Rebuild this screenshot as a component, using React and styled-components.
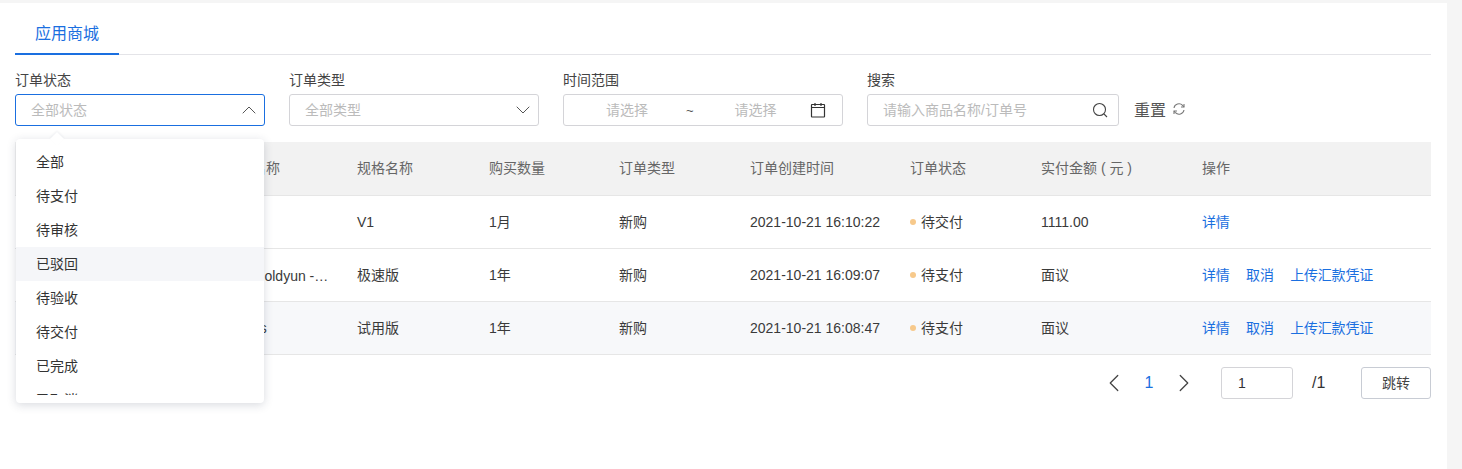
import React from 'react';
import styled, { createGlobalStyle } from 'styled-components';
import { ChevronUp, ChevronDown, ChevronLeft, ChevronRight } from 'lucide-react';

const orderStates = ['全部', '待支付', '待审核', '已驳回', '待验收', '待交付', '已完成', '已取消'];

const orders = [
  { id: '20211021161022', name: '测试', spec: 'V1', amount: '1月', type: '新购', time: '2021-10-21 16:10:22', state: '待交付', pay: '1111.00', actions: ['详情'] },
  { id: '20211021160907', name: 'Mini Goldyun - 云管理平台', spec: '极速版', amount: '1年', type: '新购', time: '2021-10-21 16:09:07', state: '待支付', pay: '面议', actions: ['详情', '取消', '上传汇款凭证'] },
  { id: '20211021160847', name: 'Nginxs', spec: '试用版', amount: '1年', type: '新购', time: '2021-10-21 16:08:47', state: '待支付', pay: '面议', actions: ['详情', '取消', '上传汇款凭证'] },
];

const columns = [
  { title: '订单编号', width: 193 },
  { title: '商品名称', width: 133 },
  { title: '规格名称', width: 132 },
  { title: '购买数量', width: 130 },
  { title: '订单类型', width: 131 },
  { title: '订单创建时间', width: 160 },
  { title: '订单状态', width: 131 },
  { title: '实付金额 ( 元 )', width: 161 },
  { title: '操作', width: 245 },
];

// Chinese glyphs sit a pixel low next to the latin ones
const hasCjk = (text) => /[^\x00-\x7f]/.test(text);

const App = () => {
  return (
    <Page>
      <GlobalStyle />
      <Panel>
        <Tabs>
          <Tab>应用商城</Tab>
        </Tabs>
        <Filters>
          <Field $width={250}>
            <Label>订单状态</Label>
            <SelectBox $focused>
              <Placeholder>全部状态</Placeholder>
              <ChevronUp size={24} strokeWidth={1} color="#555" />
            </SelectBox>
            <Dropdown>
              <DropdownList>
                {orderStates.map((state) => (
                  <DropdownItem key={state} $active={state === '已驳回'}>
                    {state}
                  </DropdownItem>
                ))}
              </DropdownList>
            </Dropdown>
          </Field>
          <Field $width={250}>
            <Label>订单类型</Label>
            <SelectBox>
              <Placeholder>全部类型</Placeholder>
              <ChevronDown size={24} strokeWidth={1} color="#555" />
            </SelectBox>
          </Field>
          <Field $width={280}>
            <Label>时间范围</Label>
            <DateBox>
              <Placeholder>请选择</Placeholder>
              <Tilde>~</Tilde>
              <Placeholder>请选择</Placeholder>
              <CalendarIcon width="16" height="16" viewBox="0 0 16 16" fill="none" stroke="#333" strokeWidth="1.2">
                <rect x="1.5" y="2.5" width="13" height="12.5" rx="0.5" />
                <path d="M1.5 5.5h13M5 1v3M11 1v3" />
              </CalendarIcon>
            </DateBox>
          </Field>
          <Field $width={252}>
            <Label>搜索</Label>
            <SearchBox>
              <Placeholder>请输入商品名称/订单号</Placeholder>
              <svg width="16" height="16" viewBox="0 0 16 16" fill="none" stroke="#444" strokeWidth="1.1">
                <circle cx="7.5" cy="7.5" r="6" />
                <path d="M12 12l3 3" />
              </svg>
            </SearchBox>
          </Field>
          <ResetButton>
            重置
            <svg width="14" height="14" viewBox="0 0 14 14" fill="none" stroke="#777" strokeWidth="1.1">
              <path d="M2 6a5 5 0 0 1 8.6-2.6L12 5" />
              <path d="M12 2v3H9" />
              <path d="M12 8a5 5 0 0 1-8.6 2.6L2 9" />
              <path d="M2 12V9h3" />
            </svg>
          </ResetButton>
        </Filters>
        <Table>
          <colgroup>
            {columns.map((col) => (
              <col key={col.title} width={col.width} />
            ))}
          </colgroup>
          <thead>
            <tr>
              {columns.map((col) => (
                <HeadCell key={col.title}>{col.title}</HeadCell>
              ))}
            </tr>
          </thead>
          <tbody>
            {orders.map((order, index) => (
              <Row key={order.id} $striped={index === 2}>
                <Cell>{order.id}</Cell>
                <NameCell>{order.name}</NameCell>
                <Cell $cjk={hasCjk(order.spec)}>{order.spec}</Cell>
                <Cell $cjk>{order.amount}</Cell>
                <Cell $cjk>{order.type}</Cell>
                <Cell>{order.time}</Cell>
                <Cell $cjk>
                  <StateDot />
                  {order.state}
                </Cell>
                <Cell $cjk={hasCjk(order.pay)}>{order.pay}</Cell>
                <Cell $cjk>
                  <Actions>
                    {order.actions.map((action) => (
                      <ActionLink key={action}>{action}</ActionLink>
                    ))}
                  </Actions>
                </Cell>
              </Row>
            ))}
          </tbody>
        </Table>
        <Pagination>
          <PageArrow>
            <ChevronLeft size={30} strokeWidth={1} color="#444" />
          </PageArrow>
          <PageNumber>1</PageNumber>
          <PageArrow>
            <ChevronRight size={30} strokeWidth={1} color="#444" />
          </PageArrow>
          <PageInput>1</PageInput>
          <PageTotal>/1</PageTotal>
          <JumpButton>跳转</JumpButton>
        </Pagination>
      </Panel>
    </Page>
  );
};

export default App;

const GlobalStyle = createGlobalStyle`
  html, body {
    margin: 0;
    padding: 0;
    background: #f5f5f5;
  }

  body {
    font-family: "Liberation Sans", "Noto Sans CJK SC", sans-serif;
    font-size: 14px;
    color: #333;
    overflow: hidden;
  }
`;

const Page = styled.div`
  height: 469px;
  padding-top: 3px;
  box-sizing: border-box;
`;

const Panel = styled.div`
  width: 1447px;
  height: 466px;
  background: #fff;
  padding: 0 16px 0 15px;
  box-sizing: border-box;
`;

const Tabs = styled.div`
  display: flex;
  height: 52px;
  border-bottom: 1px solid #e4e4e8;
  box-sizing: border-box;
`;

const Tab = styled.div`
  width: 104px;
  height: 52px;
  padding-top: 21px;
  box-sizing: border-box;
  text-align: center;
  font-size: 16px;
  line-height: 20px;
  color: #1a6fe0;
  border-bottom: 2px solid #1a6fe0;
`;

const Filters = styled.div`
  display: flex;
  align-items: flex-end;
  gap: 24px;
  margin-top: 15px;
`;

const Field = styled.div`
  position: relative;
  width: ${(props) => props.$width}px;
`;

const Label = styled.div`
  height: 24px;
  line-height: 20px;
  color: #444;
`;

const InputBox = styled.div`
  height: 32px;
  display: flex;
  align-items: center;
  justify-content: space-between;
  box-sizing: border-box;
  border: 1px solid ${(props) => (props.$focused ? '#1a6fe0' : '#d4d4d8')};
  border-radius: 3px;
  background: #fff;
`;

const SelectBox = styled(InputBox)`
  padding: 0 3px 0 15px;
`;

const SearchBox = styled(InputBox)`
  padding: 0 10px 0 15px;
`;

const DateBox = styled(InputBox)`
  justify-content: flex-start;
  padding: 0 16px 0 42px;
`;

const CalendarIcon = styled.svg`
  margin-left: auto;
`;

const Placeholder = styled.span`
  margin-bottom: 2px;
  color: #bbb;
  white-space: nowrap;
`;

const Tilde = styled.span`
  margin: 0 41px 0 38px;
  color: #555;
  font-size: 13px;
`;

const Dropdown = styled.div`
  position: absolute;
  z-index: 5;
  top: 69px;
  left: 1px;
  width: 248px;
  height: 264px;
  background: #fff;
  border-radius: 4px;
  box-shadow: 0 2px 10px rgba(40, 50, 80, 0.18);

  &::before {
    content: '';
    position: absolute;
    top: -5px;
    left: 36px;
    width: 10px;
    height: 10px;
    background: #fff;
    transform: rotate(45deg);
    box-shadow: -1px -1px 2px rgba(40, 50, 80, 0.06);
  }
`;

const DropdownList = styled.ul`
  position: relative;
  list-style: none;
  margin: 0;
  padding: 6px 0 0;
  height: 256px;
  box-sizing: border-box;
  overflow: hidden;
`;

const DropdownItem = styled.li`
  height: 34px;
  line-height: 34px;
  padding-left: 20px;
  color: #333;
  background: ${(props) => (props.$active ? '#f5f6f9' : 'transparent')};
`;

const ResetButton = styled.div`
  display: flex;
  align-items: center;
  gap: 6px;
  height: 32px;
  padding-bottom: 3px;
  box-sizing: border-box;
  margin-left: -9px;
  font-size: 16px;
  color: #555;
`;

const Table = styled.table`
  width: 1416px;
  margin-top: 16px;
  table-layout: fixed;
  border-collapse: collapse;
`;

const HeadCell = styled.th`
  height: 53px;
  padding: 0 0 2px 16px;
  box-sizing: border-box;
  background: #f2f2f2;
  border-bottom: 1px solid #e6e6e6;
  font-weight: 400;
  text-align: left;
  color: #666;
  white-space: nowrap;
`;

const Row = styled.tr`
  background: ${(props) => (props.$striped ? '#f7f8fa' : '#fff')};
`;

const Cell = styled.td`
  height: 53px;
  padding: 0 0 ${(props) => (props.$cjk ? '2px' : '0')} 16px;
  box-sizing: border-box;
  border-bottom: 1px solid #e6e6e6;
  color: #3a3a3a;
  white-space: nowrap;
`;

const NameCell = styled(Cell)`
  padding-right: 10px;
  overflow: hidden;
  text-overflow: ellipsis;
`;

const StateDot = styled.span`
  display: inline-block;
  width: 6px;
  height: 6px;
  margin-right: 5px;
  border-radius: 50%;
  background: #f7c98b;
  vertical-align: 2px;
`;

const Actions = styled.div`
  display: flex;
  gap: 16.5px;
`;

const ActionLink = styled.a`
  color: #1a6fe0;
  letter-spacing: -0.2px;
  cursor: pointer;
`;

const Pagination = styled.div`
  display: flex;
  align-items: center;
  justify-content: flex-end;
  height: 32px;
  margin-top: 12px;
`;

const PageArrow = styled.div`
  display: flex;
`;

const PageNumber = styled.div`
  width: 40px;
  text-align: center;
  color: #1a6fe0;
  font-size: 16px;
`;

const PageInput = styled.div`
  width: 72px;
  height: 32px;
  margin-left: 22px;
  padding-left: 16px;
  box-sizing: border-box;
  border: 1px solid #d4d4d8;
  border-radius: 3px;
  line-height: 30px;
`;

const PageTotal = styled.div`
  width: 68px;
  padding-left: 19px;
  box-sizing: border-box;
  font-size: 16px;
`;

const JumpButton = styled.button`
  width: 70px;
  height: 32px;
  padding: 0 0 2px;
  background: #fff;
  border: 1px solid #c8ccd4;
  border-radius: 3px;
  font: inherit;
  color: #444;
`;
